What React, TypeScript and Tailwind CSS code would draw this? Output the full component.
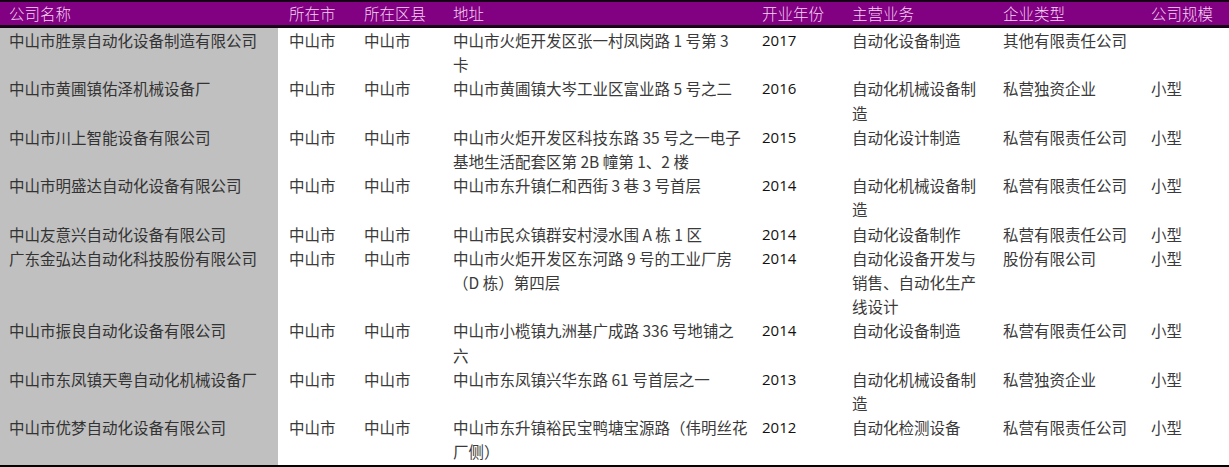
import React from "react";

type Row = {
  name: string;
  city: string;
  county: string;
  addr: string[];
  year: string;
  biz: string[];
  type: string;
  size: string;
};

const rows: Row[] = [
  { name: "中山市胜景自动化设备制造有限公司", city: "中山市", county: "中山市", addr: ["中山市火炬开发区张一村凤岗路 1 号第 3", "卡"], year: "2017", biz: ["自动化设备制造"], type: "其他有限责任公司", size: "" },
  { name: "中山市黄圃镇佑泽机械设备厂", city: "中山市", county: "中山市", addr: ["中山市黄圃镇大岑工业区富业路 5 号之二"], year: "2016", biz: ["自动化机械设备制", "造"], type: "私营独资企业", size: "小型" },
  { name: "中山市川上智能设备有限公司", city: "中山市", county: "中山市", addr: ["中山市火炬开发区科技东路 35 号之一电子", "基地生活配套区第 2B 幢第 1、2 楼"], year: "2015", biz: ["自动化设计制造"], type: "私营有限责任公司", size: "小型" },
  { name: "中山市明盛达自动化设备有限公司", city: "中山市", county: "中山市", addr: ["中山市东升镇仁和西街 3 巷 3 号首层"], year: "2014", biz: ["自动化机械设备制", "造"], type: "私营有限责任公司", size: "小型" },
  { name: "中山友意兴自动化设备有限公司", city: "中山市", county: "中山市", addr: ["中山市民众镇群安村浸水围 A 栋 1 区"], year: "2014", biz: ["自动化设备制作"], type: "私营有限责任公司", size: "小型" },
  { name: "广东金弘达自动化科技股份有限公司", city: "中山市", county: "中山市", addr: ["中山市火炬开发区东河路 9 号的工业厂房", "（D 栋）第四层"], year: "2014", biz: ["自动化设备开发与", "销售、自动化生产", "线设计"], type: "股份有限公司", size: "小型" },
  { name: "中山市振良自动化设备有限公司", city: "中山市", county: "中山市", addr: ["中山市小榄镇九洲基广成路 336 号地铺之", "六"], year: "2014", biz: ["自动化设备制造"], type: "私营有限责任公司", size: "小型" },
  { name: "中山市东凤镇天粤自动化机械设备厂", city: "中山市", county: "中山市", addr: ["中山市东凤镇兴华东路 61 号首层之一"], year: "2013", biz: ["自动化机械设备制", "造"], type: "私营独资企业", size: "小型" },
  { name: "中山市优梦自动化设备有限公司", city: "中山市", county: "中山市", addr: ["中山市东升镇裕民宝鸭塘宝源路（伟明丝花", "厂侧）"], year: "2012", biz: ["自动化检测设备"], type: "私营有限责任公司", size: "小型" },
];

const cols = "grid grid-cols-[278px_76px_89px_309px_90px_151px_148px_88px]";
const font = { fontFamily: '"Noto Sans CJK SC", "Noto Sans", sans-serif' };

function Lines({ lines }: { lines: string[] }) {
  return (
    <>
      {lines.map((l, i) => (
        <div key={i} className="whitespace-pre">{l}</div>
      ))}
    </>
  );
}

export default function App() {
  const headers = ["公司名称", "所在市", "所在区县", "地址", "开业年份", "主营业务", "企业类型", "公司规模"];
  const pads = ["pl-[9px]", "pl-[11px]", "pl-[10px]", "pl-[10px]", "pl-[10px]", "pl-[10px]", "pl-[10px]", "pl-[10px]"];
  return (
    <div className="w-[1229px] h-[467px] bg-white overflow-hidden text-[15.5px] text-[#3a3a3a]" style={font}>
      <div className={`${cols} bg-[#820082] border-t-2 border-b-[3px] border-[#150015] h-[28px] items-center leading-[23px] text-[#f4d2f2] font-light`}>
        {headers.map((h, i) => (
          <div key={i} className={pads[i]}>{h}</div>
        ))}
      </div>
      <div className="leading-[24.2px]">
        {rows.map((r, i) => (
          <div key={i} className={cols}>
            <div className="bg-[#c0c0c0] pl-[9px] text-[#333]">{r.name}</div>
            <div className="pl-[11px]">{r.city}</div>
            <div className="pl-[10px]">{r.county}</div>
            <div className="pl-[10px]"><Lines lines={r.addr} /></div>
            <div className="pl-[10px] text-[15px] font-medium text-[#111]" style={{ fontFamily: '"Open Sans", "Noto Sans", sans-serif' }}>{r.year}</div>
            <div className="pl-[10px]"><Lines lines={r.biz} /></div>
            <div className="pl-[10px]">{r.type}</div>
            <div className="pl-[10px]">{r.size}</div>
          </div>
        ))}
      </div>
      <div className="flex">
        <div className="w-[278px] bg-[#c0c0c0] h-[1px]" />
      </div>
      <div className="h-[6px] bg-black" />
    </div>
  );
}
